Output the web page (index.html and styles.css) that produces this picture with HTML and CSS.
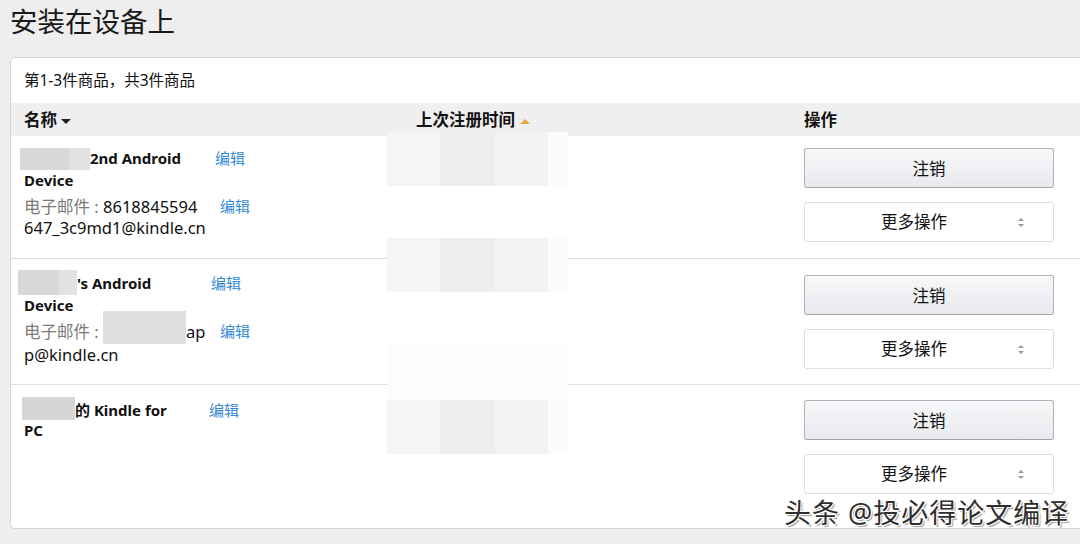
FILE: index.html
```html
<!DOCTYPE html>
<html lang="zh-CN">

<head>
    <meta charset="UTF-8">
    <meta name="viewport" content="width=device-width, initial-scale=1.0">
    <title>安装在设备上</title>
    <link rel="stylesheet" href="styles.css">
</head>

<body>
    <h1 class="titulo">安装在设备上</h1>

    <div class="tarjeta">
        <div class="resumen">第1-3件商品，共3件商品</div>

        <div class="cabecera">
            <div class="celda">名称<span class="flecha-abajo"></span></div>
            <div class="celda">上次注册时间<span class="flecha-arriba"></span></div>
            <div class="celda">操作</div>
        </div>

        <!-- fila 1 -->
        <div class="fila fila-primera">
            <div class="celda">
                <div class="linea">
                    <div class="nombre"><span class="tapa tapa-1"></span>2nd Android Device</div>
                    <a class="editar" href="#">编辑</a>
                </div>
                <div class="linea correo-linea">
                    <div class="correo"><span class="etiqueta">电子邮件 : </span>8618845594<br>647_3c9md1@kindle.cn</div>
                    <a class="editar" href="#">编辑</a>
                </div>
            </div>
            <div class="celda"></div>
            <div class="celda acciones">
                <button class="boton">注销</button>
                <div class="selector">更多操作<span class="flechas"></span></div>
            </div>
        </div>

        <!-- fila 2 -->
        <div class="fila">
            <div class="celda">
                <div class="linea">
                    <div class="nombre nombre-corto"><span class="tapa tapa-2"></span>'s Android Device</div>
                    <a class="editar" href="#">编辑</a>
                </div>
                <div class="linea correo-linea">
                    <div class="correo"><span class="etiqueta">电子邮件 : </span><span class="tapa tapa-correo"></span>ap<br>p@kindle.cn</div>
                    <a class="editar" href="#">编辑</a>
                </div>
            </div>
            <div class="celda"></div>
            <div class="celda acciones">
                <button class="boton">注销</button>
                <div class="selector">更多操作<span class="flechas"></span></div>
            </div>
        </div>

        <!-- fila 3 -->
        <div class="fila fila-ultima">
            <div class="celda">
                <div class="linea">
                    <div class="nombre nombre-pc"><span class="tapa tapa-3"></span>的 Kindle for PC</div>
                    <a class="editar" href="#">编辑</a>
                </div>
            </div>
            <div class="celda"></div>
            <div class="celda acciones">
                <button class="boton">注销</button>
                <div class="selector">更多操作<span class="flechas"></span></div>
            </div>
        </div>

        <!-- mosaicos sobre la fecha -->
        <div class="mosaico mosaico-1"></div>
        <div class="mosaico mosaico-2"></div>
        <div class="mosaico mosaico-3 mosaico-claro"></div>
        <div class="mosaico mosaico-4"></div>
    </div>

    <div class="marca">头条 @投必得论文编译</div>
</body>

</html>
```

FILE: styles.css
```css
body {
    margin: 0;
    padding: 0;
    background-color: #eeeeee;
    font-family: "Noto Sans", "Noto Sans CJK SC", sans-serif;
    color: #111111;
    width: 1080px;
    height: 544px;
    overflow: hidden;
    position: relative;
}

.titulo {
    margin: 0;
    padding: 0 0 0 10px;
    height: 57px;
    line-height: 44px;
    font-size: 27.5px;
    font-weight: normal;
    color: #1a1a1a;
}

.tarjeta {
    position: relative;
    margin-left: 10px;
    width: 1100px;
    height: 472px;
    box-sizing: border-box;
    background-color: #ffffff;
    border: 1px solid #d5d5d5;
    border-radius: 5px;
    display: flex;
    flex-direction: column;
}

.resumen {
    height: 45px;
    line-height: 45px;
    padding-left: 13px;
    font-size: 15.5px;
}

.cabecera,
.fila {
    display: grid;
    grid-template-columns: 392px 388px 1fr;
    padding-left: 13px;
}

.cabecera {
    height: 33px;
    line-height: 33px;
    background-color: #efefef;
    font-size: 16.5px;
    font-weight: bold;
}

.flecha-abajo {
    display: inline-block;
    margin-left: 4px;
    vertical-align: middle;
    border-left: 5px solid transparent;
    border-right: 5px solid transparent;
    border-top: 5px solid #222222;
}

.flecha-arriba {
    display: inline-block;
    margin-left: 5px;
    vertical-align: middle;
    border-left: 5px solid transparent;
    border-right: 5px solid transparent;
    border-bottom: 5px solid #eda53a;
}

.fila {
    height: 126px;
    box-sizing: border-box;
    padding-top: 14px;
    border-bottom: 1px solid #dddddd;
}

.fila-primera {
    height: 123px;
    padding-top: 12px;
}

.fila-ultima {
    flex: 1;
    padding-top: 15px;
    border-bottom: none;
}

.fila .acciones {
    margin-top: 2px;
}

.fila-primera .acciones,
.fila-ultima .acciones {
    margin-top: 0;
}

.linea {
    display: flex;
    align-items: flex-start;
}

.nombre {
    width: 165px;
    font-size: 15px;
    font-weight: bold;
    line-height: 20px;
}

.nombre-corto {
    width: 161px;
}

.nombre-pc {
    width: 159px;
}

.correo-linea {
    margin-top: 6px;
}

.correo {
    width: 188px;
    font-size: 16.5px;
    line-height: 21px;
}

.etiqueta {
    color: #7a7a7a;
}

.editar {
    margin-left: 26px;
    font-size: 15px;
    line-height: 20px;
    color: #3289d6;
    text-decoration: none;
}

.correo + .editar {
    margin-left: 8px;
}

.tapa {
    display: inline-block;
    vertical-align: middle;
    background: linear-gradient(to right, #d8d8d8 0, #d8d8d8 70%, #e2e2e2 70%);
}

.tapa-1 {
    width: 70px;
    height: 22px;
    margin-left: -4px;
    margin-top: -2px;
}

.tapa-2 {
    width: 59px;
    height: 25px;
    margin-left: -6px;
    margin-top: -4px;
}

.tapa-3 {
    width: 53px;
    height: 23px;
    margin-left: -2px;
    margin-top: -6px;
    background: #d6d6d6;
}

.tapa-correo {
    width: 83px;
    height: 33px;
    margin-top: -12px;
    background: #dedede;
}

.acciones {
    display: flex;
    flex-direction: column;
    gap: 14px;
    width: 250px;
}

.boton {
    height: 40px;
    width: 250px;
    font-family: inherit;
    font-size: 16.5px;
    color: #111111;
    background: linear-gradient(to bottom, #f7f8fa, #e7e9ec);
    border: 1px solid #adb1b8;
    border-bottom-color: #a2a6ac;
    border-radius: 3px;
    box-shadow: inset 0 1px 0 rgba(255, 255, 255, 0.6);
}

.selector {
    position: relative;
    height: 40px;
    line-height: 38px;
    box-sizing: border-box;
    padding-right: 30px;
    text-align: center;
    font-size: 16.5px;
    background-color: #ffffff;
    border: 1px solid #dddddd;
    border-radius: 3px;
}

.flechas {
    position: absolute;
    right: 29px;
    top: 15px;
    width: 6px;
    height: 9px;
}

.flechas::before,
.flechas::after {
    content: "";
    position: absolute;
    left: 0;
    border-left: 3px solid transparent;
    border-right: 3px solid transparent;
}

.flechas::before {
    top: 0;
    border-bottom: 3px solid #999999;
}

.flechas::after {
    bottom: 0;
    border-top: 3px solid #999999;
}

.mosaico {
    position: absolute;
    left: 376px;
    width: 181px;
    height: 54px;
    background: linear-gradient(to right,
            #f5f5f6 0, #f5f5f6 53px,
            #eeeef0 53px, #eeeef0 108px,
            #f3f3f4 108px, #f3f3f4 161px,
            #fbfbfb 161px);
}

.mosaico-1 {
    top: 74px;
}

.mosaico-2 {
    top: 180px;
}

.mosaico-3 {
    top: 287px;
}

.mosaico-4 {
    top: 342px;
}

.mosaico-claro {
    background: #fcfcfc;
}

.marca {
    position: absolute;
    left: 784px;
    top: 496px;
    font-size: 27px;
    letter-spacing: 1px;
    line-height: 34px;
    color: #2e2e2e;
    text-shadow: 1px 1px 0 #ffffff, -1px -1px 0 #ffffff, 1px -1px 0 #ffffff, -1px 1px 0 #ffffff, 2px 2px 1px #999999;
}
```
